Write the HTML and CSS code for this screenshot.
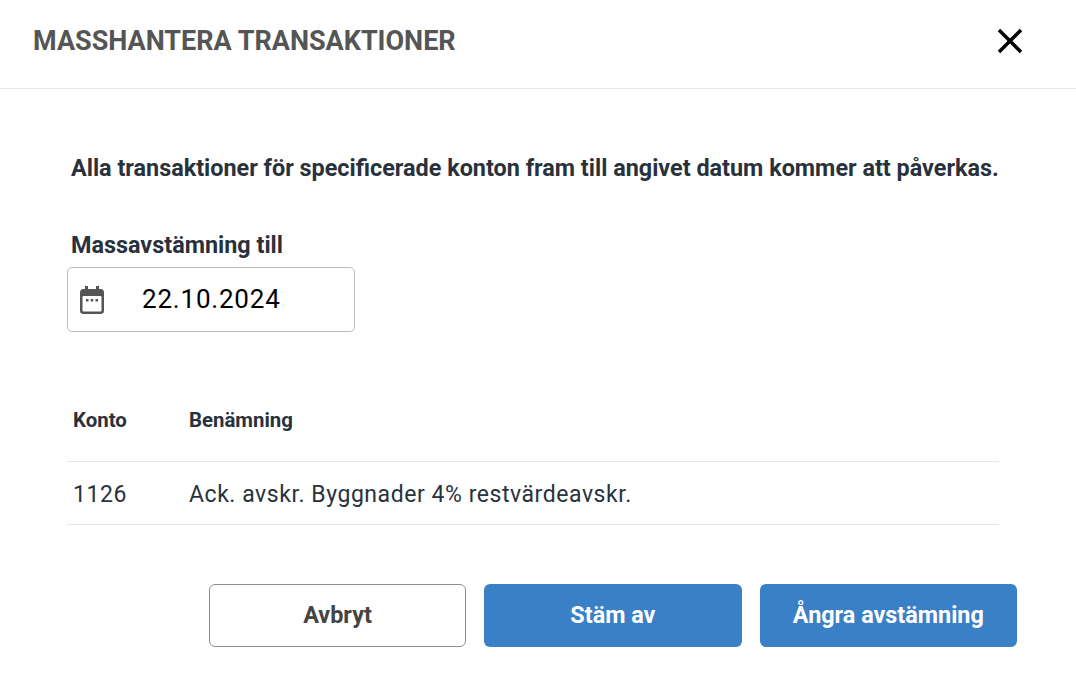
FILE: index.html
```html
<!DOCTYPE html>
<html lang="sv">
<head>
    <meta charset="UTF-8">
    <title>Masshantera transaktioner</title>
    <link rel="stylesheet" href="styles.css">
</head>
<body>
    <div class="dialog">
        <header class="dialog-header">
            <h1 class="dialog-title">MASSHANTERA TRANSAKTIONER</h1>
            <button type="button" class="close-button" aria-label="Stäng">
                <svg width="26" height="26" viewBox="0 0 26 26"><path d="M2 2 L24 24 M24 2 L2 24" stroke="#000" stroke-width="3.500" fill="none"/></svg>
            </button>
        </header>
        <main class="dialog-body">
            <p class="notice">Alla transaktioner för specificerade konton fram till angivet datum kommer att påverkas.</p>
            <label class="date-label" for="date">Massavstämning till</label>
            <div class="date-field">
                <svg class="date-icon" width="26" height="28" viewBox="0 0 26 28"><path fill="#555" d="M6 0h3v3h8V0h3v3h1.500A3.500 3.500 0 0 1 25 6.500v18a3.500 3.500 0 0 1-3.500 3.500h-17A3.500 3.500 0 0 1 1 24.500v-18A3.500 3.500 0 0 1 4.500 3H6z"/><rect x="3.500" y="10" width="19" height="15.500" rx="1" fill="#fff"/><path fill="#555" d="M7 13h2.500v2.500H7zM11.700 13h2.500v2.500h-2.500zM16.500 13H19v2.500h-2.500z"/></svg>
                <input id="date" class="date-input" type="text" value="22.10.2024">
            </div>
            <table class="account-table">
                <thead>
                    <tr><th class="col-account">Konto</th><th>Benämning</th></tr>
                </thead>
                <tbody>
                    <tr><td>1126</td><td>Ack. avskr. Byggnader 4% restvärdeavskr.</td></tr>
                </tbody>
            </table>
            <div class="actions">
                <button type="button" class="btn btn-cancel">Avbryt</button>
                <button type="button" class="btn btn-primary">Stäm av</button>
                <button type="button" class="btn btn-primary">Ångra avstämning</button>
            </div>
        </main>
    </div>
</body>
</html>
```

FILE: styles.css
```css
* {
    box-sizing: border-box;
}
body {
    margin: 0;
    background: #fff;
    font-family: Roboto, "Liberation Sans", sans-serif;
    color: #29323c;
}
.dialog {
    width: 1076px;
    height: 698px;
    overflow: hidden;
}
.dialog-header {
    height: 89px;
    padding: 0 53px 0 33px;
    display: flex;
    align-items: center;
    justify-content: space-between;
    border-bottom: 1px solid #e6e6e6;
}
.dialog-title {
    margin: 0 0 7px;
    font-size: 27px;
    font-weight: 700;
    color: #555;
}
.close-button {
    margin: 0 0 6px;
    padding: 0;
    border: none;
    background: none;
    display: flex;
}
.dialog-body {
    padding: 64px 59px 0 67px;
}
.notice {
    margin: 0 0 47px 4px;
    font-size: 23.400px;
    line-height: 30px;
    font-weight: 700;
    white-space: nowrap;
}
.date-label {
    display: block;
    margin: 0 0 7px 4px;
    font-size: 23.400px;
    line-height: 30px;
    font-weight: 700;
}
.date-field {
    width: 288px;
    height: 65px;
    border: 1px solid #bdbdbd;
    border-radius: 5px;
    display: flex;
    align-items: center;
    padding-left: 11px;
}
.date-input {
    width: 200px;
    margin-left: 37px;
    padding: 0 0 2px;
    border: none;
    outline: none;
    font-family: inherit;
    font-size: 26px;
    letter-spacing: 0.800px;
    color: #000;
}
.account-table {
    width: 932px;
    margin-top: 57px;
    border-collapse: collapse;
}
.account-table th {
    height: 72px;
    padding: 0 6px 10px;
    text-align: left;
    font-size: 20.400px;
    font-weight: 700;
    border-bottom: 1px solid #e6e6e6;
}
.account-table .col-account {
    width: 116px;
}
.account-table td {
    height: 63px;
    padding: 3px 6px 0;
    font-size: 23px;
    letter-spacing: 0.550px;
    border-bottom: 1px solid #e6e6e6;
}
.actions {
    width: 950px;
    margin-top: 59px;
    display: flex;
    justify-content: flex-end;
    gap: 18px;
}
.btn {
    width: 257.400px;
    height: 63px;
    border-radius: 6px;
    font-family: inherit;
    font-size: 23.400px;
    font-weight: 700;
    cursor: pointer;
}
.btn-cancel {
    background: #fff;
    border: 1px solid #8f8f8f;
    color: #444;
}
.btn-primary {
    background: #3a80c6;
    border: none;
    color: #fff;
}
```
